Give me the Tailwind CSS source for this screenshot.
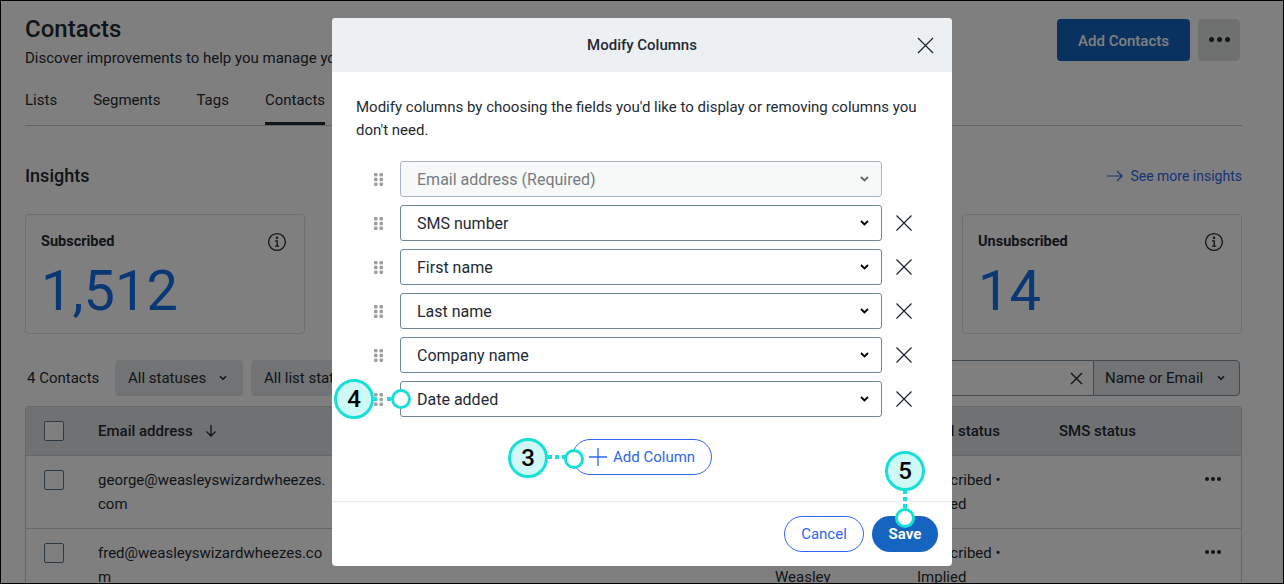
<!DOCTYPE html>
<html lang="en">
<head>
  <meta charset="UTF-8" />
  <title>Modify Columns</title>
  <script src="https://cdn.jsdelivr.net/npm/@tailwindcss/browser@4"></script>
</head>
<body class="bg-white">
<div class="relative w-[1284px] h-[584px] overflow-hidden bg-white text-[#1f2a33] font-['Roboto',sans-serif]">

  <!-- Page behind the dialog -->
  <div class="pl-[25px] pr-[42px]">
    <div class="flex justify-between pt-[15px] h-[68px]">
      <div>
        <h1 class="text-[24px] leading-[28px] font-medium">Contacts</h1>
        <p class="text-[15px] leading-[24px] mt-[3px]">Discover improvements to help you manage your contacts and lists.</p>
      </div>
      <div class="flex gap-2 pt-[4px] pr-[2px]">
        <button class="w-[133px] h-[42px] pt-[2px] rounded bg-[#1565c0] text-white text-[15px] font-medium">Add Contacts</button>
        <button class="w-[42px] h-[42px] pb-[2px] rounded bg-[#dfe3e3] flex items-center justify-center gap-[3px]">
          <span class="w-[5px] h-[5px] rounded-full bg-[#1f2a33]"></span>
          <span class="w-[5px] h-[5px] rounded-full bg-[#1f2a33]"></span>
          <span class="w-[5px] h-[5px] rounded-full bg-[#1f2a33]"></span>
        </button>
      </div>
    </div>

    <div class="flex gap-9 h-[58px] pt-[20px] border-b border-[#c7cbce] text-[15px] leading-[24px]">
      <span>Lists</span>
      <span>Segments</span>
      <span>Tags</span>
      <span class="h-[37px] border-b-[3px] border-[#1f2a33]">Contacts</span>
    </div>

    <div class="flex justify-between items-center mt-[36px] h-[26px]">
      <h2 class="text-[18px] font-medium">Insights</h2>
      <a class="flex items-center gap-[7px] pt-[2px] text-[14px] text-[#2f66f0]">
        <svg width="16" height="12" viewBox="0 0 16 12" fill="none" stroke="currentColor" stroke-width="1.2"><path d="M0 6h15M10 1l5 5-5 5"/></svg>
        See more insights
      </a>
    </div>

    <div class="flex justify-between mt-[26px]">
      <div class="w-[280px] h-[120px] rounded border border-[#dbdee0] pl-[15px] pr-[17px] pt-[17px]">
        <div class="flex justify-between items-center">
          <span class="text-[14.500px] font-bold leading-[20px]">Subscribed</span>
          <svg width="20" height="20" viewBox="0 0 20 20" fill="none" stroke="currentColor" stroke-width="1.3"><circle cx="10" cy="10" r="8.4"/><path d="M8 8.8h2.2v5.2M8 14.2h4.2"/><circle cx="10" cy="5.8" r="0.6"/></svg>
        </div>
        <div class="mt-[8px] text-[56px] leading-[62px] text-[#1570e8]">1,512</div>
      </div>
      <div class="w-[280px] h-[120px] rounded border border-[#dbdee0] pl-[15px] pr-[17px] pt-[17px]">
        <div class="flex justify-between items-center">
          <span class="text-[14.500px] font-bold leading-[20px]">Unsubscribed</span>
          <svg width="20" height="20" viewBox="0 0 20 20" fill="none" stroke="currentColor" stroke-width="1.3"><circle cx="10" cy="10" r="8.4"/><path d="M8 8.8h2.2v5.2M8 14.2h4.2"/><circle cx="10" cy="5.8" r="0.6"/></svg>
        </div>
        <div class="mt-[8px] text-[56px] leading-[62px] text-[#1570e8]">14</div>
      </div>
    </div>

    <div class="flex items-center mt-[26px] h-[36px] text-[15px] pr-[2px]">
      <span class="w-[90px] pl-[2px]">4 Contacts</span>
      <button class="w-[128px] h-[36px] rounded bg-[#e4e7e8] flex items-center pl-[13px] gap-[13px]">
        All statuses
        <svg width="8" height="6" viewBox="0 0 8 6" fill="none" stroke="currentColor" stroke-width="1.6"><path d="M1 1.200 4 4.200l3-3"/></svg>
      </button>
      <button class="w-[128px] h-[36px] rounded bg-[#e4e7e8] flex items-center pl-[13px] ml-2">All list status</button>
      <div class="flex-1"></div>
      <div class="w-[300px] h-[36px] rounded-l border border-r-0 border-[#7f929f] flex items-center justify-end pr-[10px]">
        <svg width="13" height="13" viewBox="0 0 13 13" fill="none" stroke="currentColor" stroke-width="1.4"><path d="M1 1l11 11M12 1 1 12"/></svg>
      </div>
      <div class="w-[147px] h-[36px] rounded-r border border-[#7f929f] bg-[#e4e7e8] flex items-center pl-[11px] gap-[14px]">
        Name or Email
        <svg width="8" height="6" viewBox="0 0 8 6" fill="none" stroke="currentColor" stroke-width="1.6"><path d="M1 1.200 4 4.200l3-3"/></svg>
      </div>
    </div>

    <div class="mt-[10px] rounded-t border border-b-0 border-[#c9d0d5] text-[15px] leading-[24px]">
      <div class="grid grid-cols-[72px_677px_142px_142px_1fr_36px] items-center h-[49px] bg-[#dfe3e6] border-b border-[#c9d0d5] font-medium">
        <span class="pl-[18px]"><span class="block w-[20px] h-[20px] rounded-[2px] border border-[#5e7382] bg-white"></span></span>
        <span class="flex items-center gap-[11px]">Email address
          <svg width="14" height="14" viewBox="0 0 14 14" fill="none" stroke="currentColor" stroke-width="1.3"><path d="M7 1v11M2.500 7.500 7 12l4.500-4.500"/></svg>
        </span>
        <span></span>
        <span>Email status</span>
        <span>SMS status</span>
        <span></span>
      </div>
      <div class="grid grid-cols-[72px_677px_142px_142px_1fr_36px] h-[73px] pt-[12px] border-b border-[#c9d0d5]">
        <span class="pl-[18px]"><span class="block mt-[2px] w-[20px] h-[20px] rounded-[2px] border border-[#5e7382] bg-white"></span></span>
        <span class="w-[232px] break-all">george@weasleyswizardwheezes.com</span>
        <span></span>
        <span>Subscribed •<br>Implied</span>
        <span></span>
        <span class="flex gap-[2px] pt-[9px]"><i class="w-[4px] h-[4px] rounded-full bg-[#1f2a33]"></i><i class="w-[4px] h-[4px] rounded-full bg-[#1f2a33]"></i><i class="w-[4px] h-[4px] rounded-full bg-[#1f2a33]"></i></span>
      </div>
      <div class="grid grid-cols-[72px_677px_142px_142px_1fr_36px] h-[73px] pt-[12px]">
        <span class="pl-[18px]"><span class="block mt-[2px] w-[20px] h-[20px] rounded-[2px] border border-[#5e7382] bg-white"></span></span>
        <span class="w-[232px] break-all">fred@weasleyswizardwheezes.com</span>
        <span class="pt-[24px]">Weasley</span>
        <span>Subscribed •<br>Implied</span>
        <span></span>
        <span class="flex gap-[2px] pt-[9px]"><i class="w-[4px] h-[4px] rounded-full bg-[#1f2a33]"></i><i class="w-[4px] h-[4px] rounded-full bg-[#1f2a33]"></i><i class="w-[4px] h-[4px] rounded-full bg-[#1f2a33]"></i></span>
      </div>
    </div>
  </div>

  <!-- Overlay and dialog -->
  <div class="absolute inset-0 bg-black/50 flex justify-center items-start pt-[18px]">
    <div class="relative w-[620px] h-[548px] rounded bg-white flex flex-col">
      <div class="relative h-[54px] shrink-0 rounded-t bg-[#edf0f2] flex items-center justify-center text-[15px] font-medium">
        Modify Columns
        <svg class="absolute right-[18px] top-[19px]" width="17" height="17" viewBox="0 0 17 17" fill="none" stroke="#1f2a33" stroke-width="1.3"><path d="M1 1l15 15M16 1 1 16"/></svg>
      </div>

      <div class="flex-1 px-[24px] pt-[24px]">
        <p class="text-[15px] leading-[23px]">Modify columns by choosing the fields you'd like to display or removing columns you don't need.</p>

        <div class="mt-[19px] flex flex-col gap-[8px]">
          <div class="flex items-center h-[36px]">
            <svg class="ml-[18px] mr-[17px]" width="9" height="13" viewBox="0 0 9 13" fill="#9a9ea1"><rect x="0" y="0" width="3.500" height="3.500" rx="1.200"/><rect x="5.500" y="0" width="3.500" height="3.500" rx="1.200"/><rect x="0" y="4.750" width="3.500" height="3.500" rx="1.200"/><rect x="5.500" y="4.750" width="3.500" height="3.500" rx="1.200"/><rect x="0" y="9.500" width="3.500" height="3.500" rx="1.200"/><rect x="5.500" y="9.500" width="3.500" height="3.500" rx="1.200"/></svg>
            <div class="w-[482px] h-[36px] rounded-[3px] border border-[#a9b6bf] bg-[#f7f8f8] flex items-center justify-between pl-[16px] pr-[12px] text-[16px] text-[#757c82]">
              <span class="mt-[2px]">Email address (Required)</span>
              <svg width="9" height="6" viewBox="0 0 9 6" fill="none" stroke="#666" stroke-width="1.8"><path d="M1 1l3.500 3.500L8 1"/></svg>
            </div>
          </div>

          <div class="flex items-center h-[36px]">
            <svg class="ml-[18px] mr-[17px]" width="9" height="13" viewBox="0 0 9 13" fill="#9a9ea1"><rect x="0" y="0" width="3.500" height="3.500" rx="1.200"/><rect x="5.500" y="0" width="3.500" height="3.500" rx="1.200"/><rect x="0" y="4.750" width="3.500" height="3.500" rx="1.200"/><rect x="5.500" y="4.750" width="3.500" height="3.500" rx="1.200"/><rect x="0" y="9.500" width="3.500" height="3.500" rx="1.200"/><rect x="5.500" y="9.500" width="3.500" height="3.500" rx="1.200"/></svg>
            <div class="w-[482px] h-[36px] rounded-[3px] border border-[#6f8897] flex items-center justify-between pl-[16px] pr-[12px] text-[16px]">
              <span class="mt-[2px]">SMS number</span>
              <svg width="9" height="6" viewBox="0 0 9 6" fill="none" stroke="#000" stroke-width="1.8"><path d="M1 1l3.500 3.500L8 1"/></svg>
            </div>
            <svg class="ml-[14px]" width="16" height="16" viewBox="0 0 16 16" fill="none" stroke="#1f2a33" stroke-width="1.3"><path d="M.5.5l15 15M15.500.5l-15 15"/></svg>
          </div>

          <div class="flex items-center h-[36px]">
            <svg class="ml-[18px] mr-[17px]" width="9" height="13" viewBox="0 0 9 13" fill="#9a9ea1"><rect x="0" y="0" width="3.500" height="3.500" rx="1.200"/><rect x="5.500" y="0" width="3.500" height="3.500" rx="1.200"/><rect x="0" y="4.750" width="3.500" height="3.500" rx="1.200"/><rect x="5.500" y="4.750" width="3.500" height="3.500" rx="1.200"/><rect x="0" y="9.500" width="3.500" height="3.500" rx="1.200"/><rect x="5.500" y="9.500" width="3.500" height="3.500" rx="1.200"/></svg>
            <div class="w-[482px] h-[36px] rounded-[3px] border border-[#6f8897] flex items-center justify-between pl-[16px] pr-[12px] text-[16px]">
              <span class="mt-[2px]">First name</span>
              <svg width="9" height="6" viewBox="0 0 9 6" fill="none" stroke="#000" stroke-width="1.8"><path d="M1 1l3.500 3.500L8 1"/></svg>
            </div>
            <svg class="ml-[14px]" width="16" height="16" viewBox="0 0 16 16" fill="none" stroke="#1f2a33" stroke-width="1.3"><path d="M.5.5l15 15M15.500.5l-15 15"/></svg>
          </div>

          <div class="flex items-center h-[36px]">
            <svg class="ml-[18px] mr-[17px]" width="9" height="13" viewBox="0 0 9 13" fill="#9a9ea1"><rect x="0" y="0" width="3.500" height="3.500" rx="1.200"/><rect x="5.500" y="0" width="3.500" height="3.500" rx="1.200"/><rect x="0" y="4.750" width="3.500" height="3.500" rx="1.200"/><rect x="5.500" y="4.750" width="3.500" height="3.500" rx="1.200"/><rect x="0" y="9.500" width="3.500" height="3.500" rx="1.200"/><rect x="5.500" y="9.500" width="3.500" height="3.500" rx="1.200"/></svg>
            <div class="w-[482px] h-[36px] rounded-[3px] border border-[#6f8897] flex items-center justify-between pl-[16px] pr-[12px] text-[16px]">
              <span class="mt-[2px]">Last name</span>
              <svg width="9" height="6" viewBox="0 0 9 6" fill="none" stroke="#000" stroke-width="1.8"><path d="M1 1l3.500 3.500L8 1"/></svg>
            </div>
            <svg class="ml-[14px]" width="16" height="16" viewBox="0 0 16 16" fill="none" stroke="#1f2a33" stroke-width="1.3"><path d="M.5.5l15 15M15.500.5l-15 15"/></svg>
          </div>

          <div class="flex items-center h-[36px]">
            <svg class="ml-[18px] mr-[17px]" width="9" height="13" viewBox="0 0 9 13" fill="#9a9ea1"><rect x="0" y="0" width="3.500" height="3.500" rx="1.200"/><rect x="5.500" y="0" width="3.500" height="3.500" rx="1.200"/><rect x="0" y="4.750" width="3.500" height="3.500" rx="1.200"/><rect x="5.500" y="4.750" width="3.500" height="3.500" rx="1.200"/><rect x="0" y="9.500" width="3.500" height="3.500" rx="1.200"/><rect x="5.500" y="9.500" width="3.500" height="3.500" rx="1.200"/></svg>
            <div class="w-[482px] h-[36px] rounded-[3px] border border-[#6f8897] flex items-center justify-between pl-[16px] pr-[12px] text-[16px]">
              <span class="mt-[2px]">Company name</span>
              <svg width="9" height="6" viewBox="0 0 9 6" fill="none" stroke="#000" stroke-width="1.8"><path d="M1 1l3.500 3.500L8 1"/></svg>
            </div>
            <svg class="ml-[14px]" width="16" height="16" viewBox="0 0 16 16" fill="none" stroke="#1f2a33" stroke-width="1.3"><path d="M.5.5l15 15M15.500.5l-15 15"/></svg>
          </div>

          <div class="flex items-center h-[36px]">
            <svg class="ml-[18px] mr-[17px]" width="9" height="13" viewBox="0 0 9 13" fill="#9a9ea1"><rect x="0" y="0" width="3.500" height="3.500" rx="1.200"/><rect x="5.500" y="0" width="3.500" height="3.500" rx="1.200"/><rect x="0" y="4.750" width="3.500" height="3.500" rx="1.200"/><rect x="5.500" y="4.750" width="3.500" height="3.500" rx="1.200"/><rect x="0" y="9.500" width="3.500" height="3.500" rx="1.200"/><rect x="5.500" y="9.500" width="3.500" height="3.500" rx="1.200"/></svg>
            <div class="w-[482px] h-[36px] rounded-[3px] border border-[#6f8897] flex items-center justify-between pl-[16px] pr-[12px] text-[16px]">
              <span class="mt-[2px]">Date added</span>
              <svg width="9" height="6" viewBox="0 0 9 6" fill="none" stroke="#000" stroke-width="1.8"><path d="M1 1l3.500 3.500L8 1"/></svg>
            </div>
            <svg class="ml-[14px]" width="16" height="16" viewBox="0 0 16 16" fill="none" stroke="#1f2a33" stroke-width="1.3"><path d="M.5.5l15 15M15.500.5l-15 15"/></svg>
          </div>
        </div>

        <div class="flex justify-center mt-[22px]">
          <button class="w-[140px] h-[36px] rounded-full border border-[#2f66f0] text-[#2f66f0] text-[15px] flex items-center pl-[16px] gap-[6px]">
            <svg width="18" height="18" viewBox="0 0 18 18" fill="none" stroke="currentColor" stroke-width="1.300"><path d="M9 0v18M0 9h18"/></svg>
            Add Column
          </button>
        </div>
      </div>

      <div class="h-[65px] shrink-0 border-t border-[#e8eaeb] flex justify-end gap-2 pt-[14px] pr-[14px]">
        <button class="w-[80px] h-[36px] rounded-full border border-[#2f66f0] text-[#2f66f0] text-[15px]">Cancel</button>
        <button class="w-[66px] h-[36px] rounded-full bg-[#1565c0] text-white text-[15px] font-bold">Save</button>
      </div>

      <!-- Callouts 4, 3, 5 -->
      <div class="absolute left-[2px] top-[361px] w-[40px] h-[40px] rounded-full border-[3px] border-[#19e0d6] bg-[#cff9f6] flex items-center justify-center text-[24px] font-medium text-black">4</div>
      <div class="absolute left-[41px] top-[379px] flex gap-[10px]">
        <span class="w-[4px] h-[4px] bg-[#19e0d6]"></span><span class="w-[4px] h-[4px] bg-[#19e0d6]"></span>
      </div>
      <div class="absolute left-[59px] top-[371px] w-[20px] h-[20px] rounded-full border-[3px] border-[#19e0d6] bg-white"></div>

      <div class="absolute left-[176px] top-[420px] w-[40px] h-[40px] rounded-full border-[3px] border-[#19e0d6] bg-[#cff9f6] flex items-center justify-center text-[24px] font-medium text-black">3</div>
      <div class="absolute left-[216px] top-[437px] flex gap-[3px]">
        <span class="w-[4px] h-[4px] bg-[#19e0d6]"></span><span class="w-[4px] h-[4px] bg-[#19e0d6]"></span><span class="w-[4px] h-[4px] bg-[#19e0d6]"></span>
      </div>
      <div class="absolute left-[232px] top-[431px] w-[20px] h-[20px] rounded-full border-[3px] border-[#19e0d6] bg-white"></div>

      <div class="absolute left-[553px] top-[433px] w-[40px] h-[40px] rounded-full border-[3px] border-[#19e0d6] bg-[#cff9f6] flex items-center justify-center text-[24px] font-medium text-black">5</div>
      <div class="absolute left-[571px] top-[472px] flex flex-col gap-[3px]">
        <span class="w-[4px] h-[4px] bg-[#19e0d6]"></span><span class="w-[4px] h-[4px] bg-[#19e0d6]"></span><span class="w-[4px] h-[4px] bg-[#19e0d6]"></span>
      </div>
      <div class="absolute left-[563px] top-[490px] w-[20px] h-[20px] rounded-full border-[3px] border-[#19e0d6] bg-white"></div>
    </div>
  </div>

  <!-- Screenshot edge -->
  <div class="absolute inset-0 border border-black pointer-events-none"></div>
</div>
</body>
</html>
